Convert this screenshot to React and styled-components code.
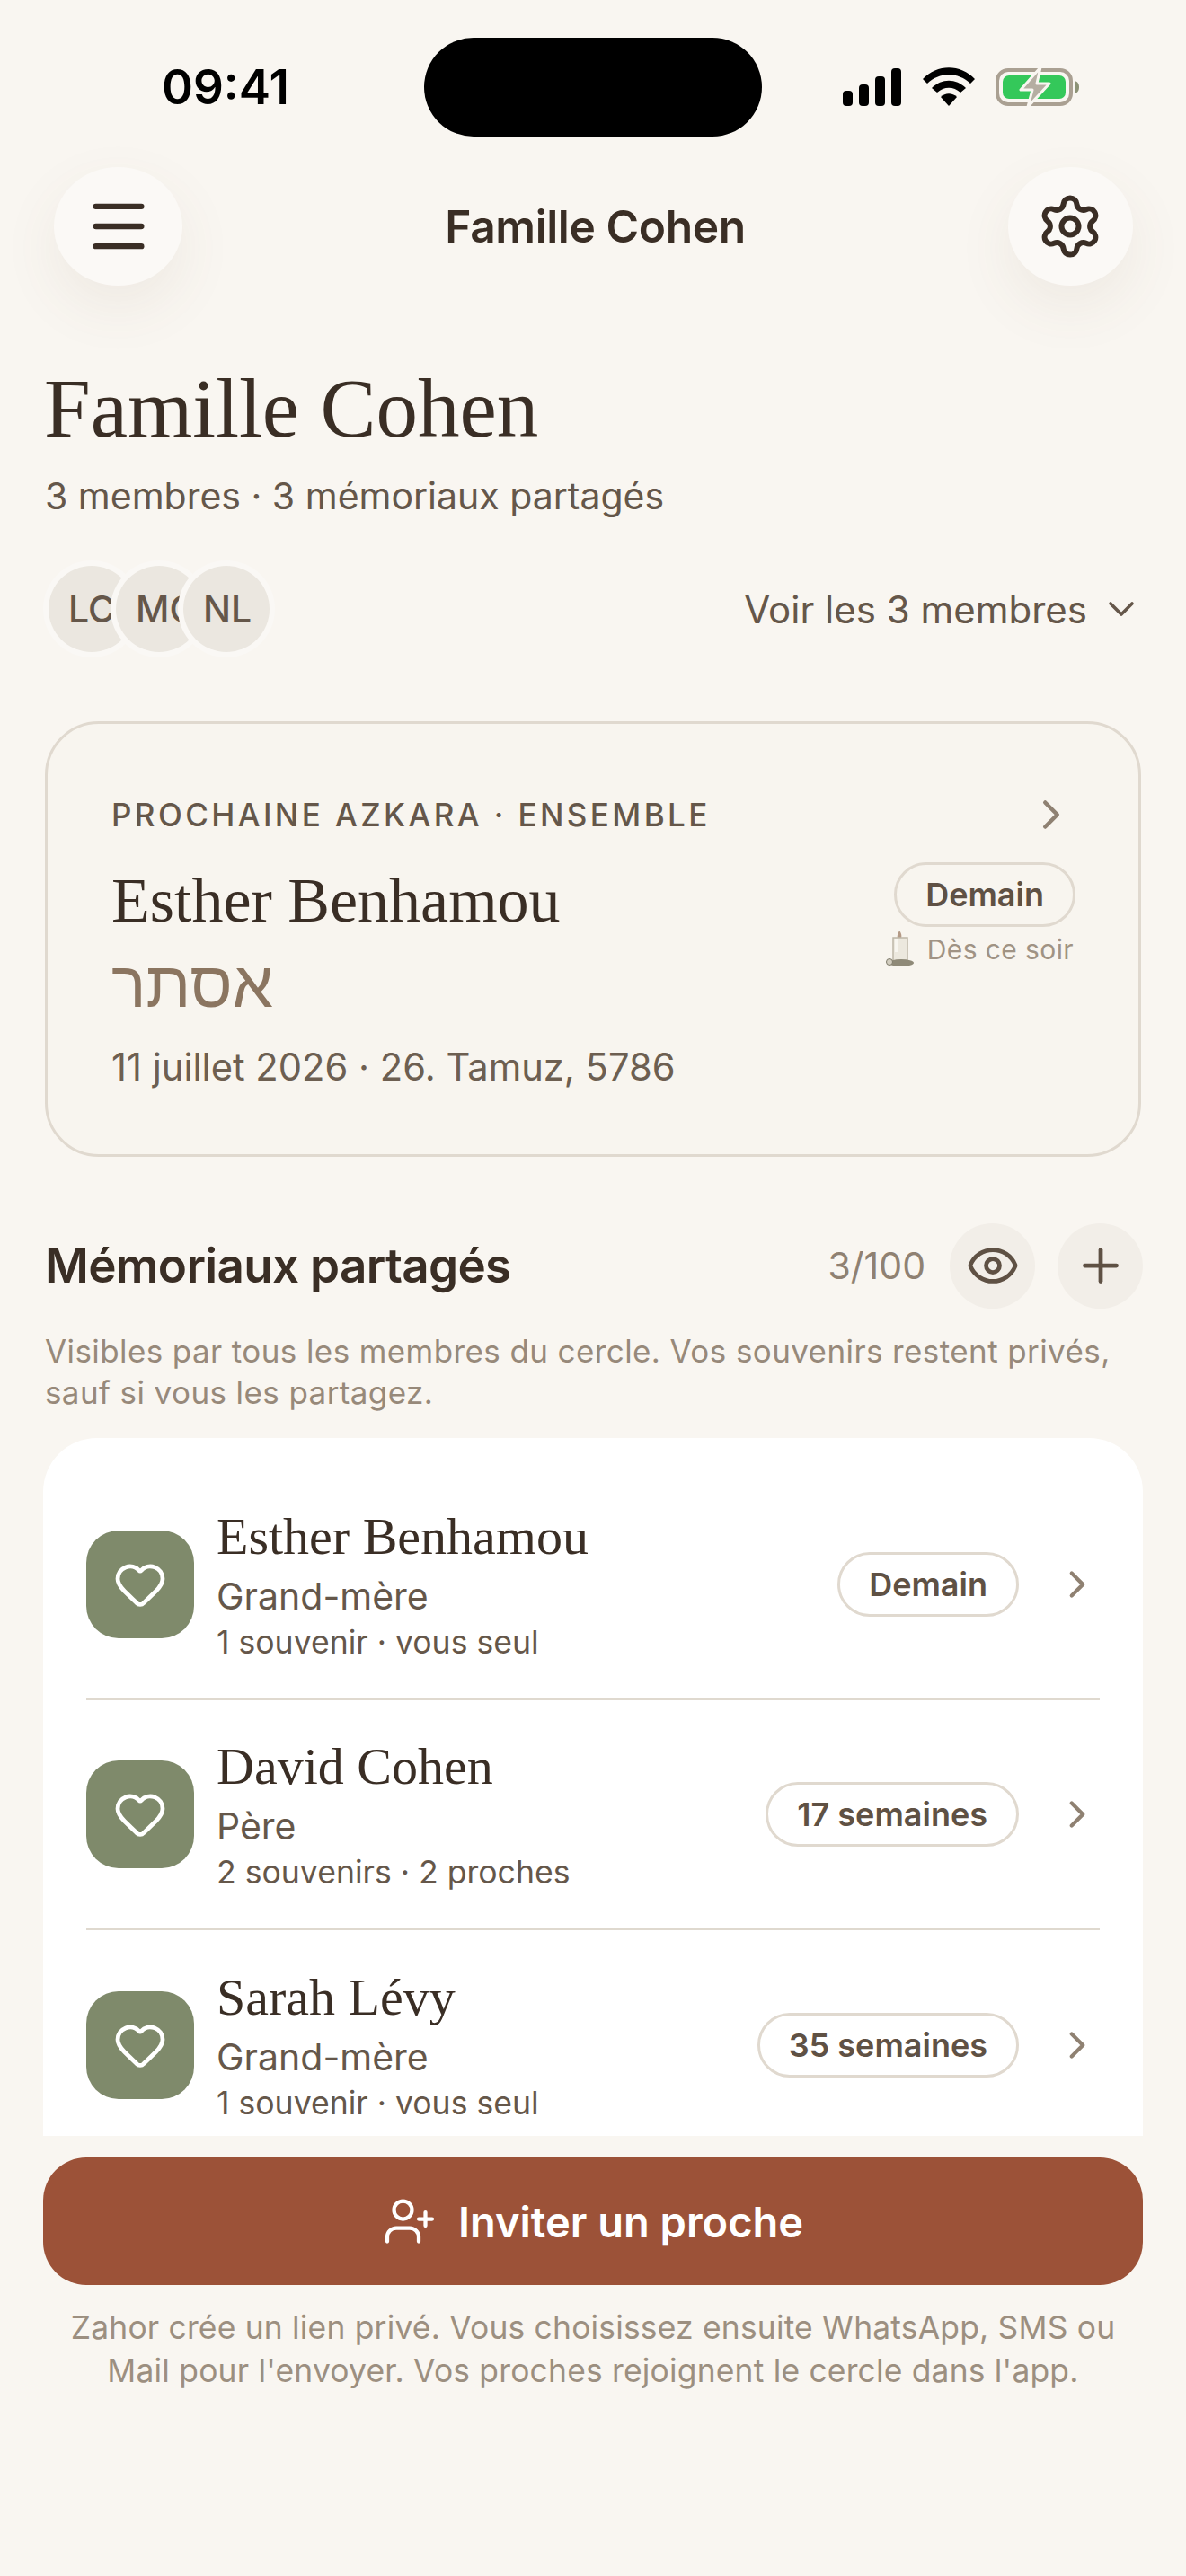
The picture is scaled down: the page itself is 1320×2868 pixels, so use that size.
import React from "react";
import styled, { createGlobalStyle } from "styled-components";
import { Menu, Settings, ChevronDown, ChevronRight, Eye, Plus, Heart, UserPlus } from "lucide-react";

const Global = createGlobalStyle`
  html, body { margin: 0; padding: 0; background: #F9F6F1; }
  * { box-sizing: border-box; }
`;
const SANS = `Inter, "Liberation Sans", sans-serif`;
const SERIF = `"Liberation Serif", serif`;

const Screen = styled.div`
  width: 1320px; height: 2868px; background: #F9F6F1; font-family: ${SANS}; color: #3A2E25;
  display: flex; flex-direction: column; overflow: hidden;
`;
const StatusBar = styled.div`
  height: 186px; flex: none; padding: 42px 118px 0 180px; display: flex; align-items: flex-start;
`;
const Clock = styled.div`
  width: 142px; height: 110px; line-height: 110px; font-size: 53px; font-weight: 600; color: #000; white-space: nowrap;
`;
const Island = styled.div`
  width: 376px; height: 110px; border-radius: 55px; background: #000; margin-left: 150px;
`;
const StatusIcons = styled.div`
  margin-left: auto; height: 110px; display: flex; align-items: center; padding-top: 0; gap: 23px;
`;
const Header = styled.div`
  flex: none; height: 132px; padding: 0 59px 0 60px; display: flex; align-items: center; justify-content: space-between;
`;
const RoundButton = styled.div`
  width: ${p => p.$w}px; height: 132px; border-radius: 50%; background: #FBF9F6;
  box-shadow: 0 24px 64px rgba(110, 90, 70, 0.08); display: flex; align-items: center; justify-content: center; color: #3A2E25;
`;
const HeaderTitle = styled.div`
  font-size: 49.7px; font-weight: 600; color: #3A2E25; letter-spacing: -0.4px;
`;
const Scroll = styled.div`
  flex: none; height: 2060px; overflow: hidden; padding: 82px 48px 0 48px;
`;
const PageTitle = styled.h1`
  margin: 0 0 0 1px; font-family: ${SERIF}; font-weight: 400; font-size: 93px; line-height: 110px; color: #3A2E25;
`;
const PageSub = styled.div`
  margin: 16px 0 0 2px; font-size: 41px; line-height: 52px; color: #65574A; white-space: nowrap;
`;
const MembersRow = styled.div`
  margin-top: 46px; display: flex; align-items: center; justify-content: space-between; height: 108px;
`;
const Avatars = styled.div`
  display: flex; padding-left: 6px;
`;
const Avatar = styled.div`
  width: 96px; height: 96px; border-radius: 50%; background: #EBE7E0; overflow: hidden; flex: none;
  box-shadow: 0 0 0 6px #FAF8F5; margin-right: -21px;
  font-size: 41px; font-weight: 500; color: #65574A; line-height: 96px; text-align: left; padding-left: 22px; white-space: nowrap;
`;
const MembersToggle = styled.div`
  display: flex; align-items: center; gap: 14px; font-size: 42px; color: #65574A;
`;
const NextCard = styled.div`
  margin: 71px 0 0 2px; width: 1220px; height: 485px; border: 3px solid #E0D9CF; border-radius: 60px;
  background: #F8F5EF; padding: 78px 70px 0 71px; display: flex; flex-direction: column;
`;
const CardTop = styled.div`
  display: flex; align-items: center; justify-content: space-between; height: 46px;
`;
const Eyebrow = styled.div`
  font-size: 35px; font-weight: 550; letter-spacing: 3.4px; color: #65574A; white-space: nowrap;
`;
const CardBody = styled.div`
  display: flex; justify-content: space-between; margin-top: 31px;
`;
const CardName = styled.div`
  font-family: ${SERIF}; font-size: 70px; line-height: 84px; color: #3A2E25; white-space: nowrap;
`;
const Hebrew = styled.div`
  font-family: "Liberation Sans", sans-serif; font-size: 72px; line-height: 90px; color: #8B7560; margin-top: 6px;
`;
const CardDate = styled.div`
  margin-top: 21px; font-size: 41.7px; line-height: 52px; color: #6D5F51; white-space: nowrap;
`;
const CardRight = styled.div`
  display: flex; flex-direction: column; align-items: flex-end; margin-top: -1px;
`;
const Pill = styled.div`
  height: 72px; padding: 0 32px; border: 3px solid #E0D9CF; border-radius: 36px; background: transparent;
  display: inline-flex; align-items: center; font-size: 36px; font-weight: 600; color: #5F5144; white-space: nowrap;
`;
const Evening = styled.div`
  display: flex; align-items: center; gap: 14px; margin-top: 3px; font-size: 30px; color: #A09384; line-height: 44px; padding-right: 2px; letter-spacing: 0.4px;
`;
const SectionHead = styled.div`
  margin-top: 73px; display: flex; align-items: center; height: 96px;
`;
const SectionTitle = styled.h2`
  margin: 0 0 0 2px; font-size: 53px; font-weight: 600; color: #3A2E25; letter-spacing: -0.7px; flex: 1; white-space: nowrap;
`;
const Count = styled.div`
  font-size: 41px; color: #8F8172; margin-right: 27px;
`;
const IconCircle = styled.div`
  width: 95px; height: 95px; border-radius: 50%; background: #F2EEE8; display: flex; align-items: center; justify-content: center; color: #5F5144; margin-left: ${p => p.$ml || 0}px;
`;
const SectionDesc = styled.p`
  margin: 24px 0 0 2px; font-size: 35px; line-height: 46px; color: #97897A; letter-spacing: 0.4px; white-space: pre-line;
`;
const ListCard = styled.div`
  margin-top: 28px; background: #fff; border-radius: 60px 60px 0 0; padding: 36px 48px 0 48px;
`;
const Row = styled.div`
  height: 256px; display: flex; align-items: center; border-bottom: ${p => (p.$last ? "none" : "3px solid #DFD9CF")};
`;
const Tile = styled.div`
  width: 120px; height: 120px; border-radius: 36px; background: #7F8A6B; display: flex; align-items: center; justify-content: center; color: #fff; flex: none;
`;
const RowText = styled.div`
  margin-left: 25px; flex: 1; display: flex; flex-direction: column;
`;
const RowName = styled.div`
  font-family: ${SERIF}; font-size: 58px; line-height: 72px; color: #3A2E25; white-space: nowrap;
`;
const RowRole = styled.div`
  font-size: 41px; line-height: 56px; color: #65574A; margin-top: 2px;
`;
const RowMeta = styled.div`
  font-size: 35.6px; line-height: 48px; color: #65574A; white-space: nowrap;
`;
const RowChevron = styled.div`
  width: 90px; display: flex; justify-content: flex-end; color: #8F8172;
`;
const Footer = styled.div`
  flex: none; padding: 24px 48px 0 48px;
`;
const Cta = styled.div`
  height: 142px; border-radius: 48px; background: #9C5238; color: #fff; display: flex; align-items: center; justify-content: center; gap: 24px;
  font-size: 47px; font-weight: 600;
`;
const FooterNote = styled.p`
  margin: 24px 0 0; text-align: center; font-size: 35.4px; line-height: 48px; color: #9C8F80; white-space: pre-line; letter-spacing: 0.2px;
`;

const Candle = () => (
  <svg width="32" height="42" viewBox="0 0 32 42">
    <path d="M15 0 C17 3 18 5 17 9 L13 9 C12 5 14 3 15 0Z" fill="#B49A86" />
    <path d="M8 8 H24 V34 H8Z" fill="#ECE8DE" stroke="#BDB6A8" strokeWidth="1.5" />
    <path d="M10 9 V24 H14 V9Z" fill="#F8F6F0" />
    <ellipse cx="17" cy="36" rx="14" ry="4" fill="#8F8A78" />
    <circle cx="4" cy="35" r="3.5" fill="#D2CDBF" stroke="#7E7A6A" strokeWidth="1" />
  </svg>
);

const rows = [
  { name: "Esther Benhamou", role: "Grand-mère", meta: "1 souvenir · vous seul", badge: "Demain" },
  { name: "David Cohen", role: "Père", meta: "2 souvenirs · 2 proches", badge: "17 semaines" },
  { name: "Sarah Lévy", role: "Grand-mère", meta: "1 souvenir · vous seul", badge: "35 semaines", last: true },
];

export default function App() {
  return (
    <Screen>
      <Global />
      <StatusBar>
        <Clock>09:41</Clock>
        <Island />
        <StatusIcons>
          <svg width="66" height="42" viewBox="0 0 66 42">
            <rect x="0" y="25" width="11" height="17" rx="4" fill="#000" />
            <rect x="18" y="18" width="11" height="24" rx="4" fill="#000" />
            <rect x="36" y="9" width="11" height="33" rx="4" fill="#000" />
            <rect x="54" y="0" width="11" height="42" rx="4" fill="#000" />
          </svg>
          <svg width="58" height="44" viewBox="0 0 58 44">
            <path d="M0 13 C16 -4 42 -4 58 13 L53 18 C40 5 18 5 5 18Z" fill="#000" />
            <path d="M10 23 C21 12 37 12 48 23 L42 28 C34 21 24 21 16 28Z" fill="#000" />
            <path d="M20 33 C25 28 33 28 38 33 L29 43Z" fill="#000" />
          </svg>
          <svg width="94" height="44" viewBox="0 0 94 44">
            <rect x="2" y="3" width="82" height="38" rx="12" fill="none" stroke="#AAA092" strokeWidth="4" />
            <rect x="8" y="9" width="70" height="26" rx="7" fill="#34C85A" />
            <path d="M88 15 C92 16 93 19 93 22 C93 25 92 28 88 29Z" fill="#8C9276" />
            <path d="M50 0 L28 25 H41 L36 44 L60 18 H46Z" fill="#B5AEA2" stroke="#F9F6F1" strokeWidth="3" strokeLinejoin="round" />
          </svg>
        </StatusIcons>
      </StatusBar>
      <Header>
        <RoundButton $w={143}><Menu size={76} strokeWidth={2} /></RoundButton>
        <HeaderTitle>Famille Cohen</HeaderTitle>
        <RoundButton $w={139}><Settings size={76} strokeWidth={1.9} /></RoundButton>
      </Header>
      <Scroll>
        <PageTitle>Famille Cohen</PageTitle>
        <PageSub>3 membres · 3 mémoriaux partagés</PageSub>
        <MembersRow>
          <Avatars>
            <Avatar>LC</Avatar>
            <Avatar>MC</Avatar>
            <Avatar>NL</Avatar>
          </Avatars>
          <MembersToggle>Voir les 3 membres <ChevronDown size={48} strokeWidth={1.8} /></MembersToggle>
        </MembersRow>
        <NextCard>
          <CardTop>
            <Eyebrow>PROCHAINE AZKARA · ENSEMBLE</Eyebrow>
            <ChevronRight size={54} strokeWidth={2} color="#8F8172" />
          </CardTop>
          <CardBody>
            <div>
              <CardName>Esther Benhamou</CardName>
              <Hebrew>אסתר</Hebrew>
              <CardDate>11 juillet 2026 · 26. Tamuz, 5786</CardDate>
            </div>
            <CardRight>
              <Pill>Demain</Pill>
              <Evening><Candle />Dès ce soir</Evening>
            </CardRight>
          </CardBody>
        </NextCard>
        <SectionHead>
          <SectionTitle>Mémoriaux partagés</SectionTitle>
          <Count>3/100</Count>
          <IconCircle><Eye size={60} strokeWidth={1.9} /></IconCircle>
          <IconCircle $ml={25}><Plus size={60} strokeWidth={1.9} /></IconCircle>
        </SectionHead>
        <SectionDesc>{"Visibles par tous les membres du cercle. Vos souvenirs restent privés,\nsauf si vous les partagez."}</SectionDesc>
        <ListCard>
          {rows.map(r => (
            <Row key={r.name} $last={r.last}>
              <Tile><Heart size={60} strokeWidth={1.9} /></Tile>
              <RowText>
                <RowName>{r.name}</RowName>
                <RowRole>{r.role}</RowRole>
                <RowMeta>{r.meta}</RowMeta>
              </RowText>
              <Pill>{r.badge}</Pill>
              <RowChevron><ChevronRight size={50} strokeWidth={2} /></RowChevron>
            </Row>
          ))}
        </ListCard>
      </Scroll>
      <Footer>
        <Cta><UserPlus size={60} strokeWidth={1.7} />Inviter un proche</Cta>
        <FooterNote>{"Zahor crée un lien privé. Vous choisissez ensuite WhatsApp, SMS ou\nMail pour l'envoyer. Vos proches rejoignent le cercle dans l'app."}</FooterNote>
      </Footer>
    </Screen>
  );
}
